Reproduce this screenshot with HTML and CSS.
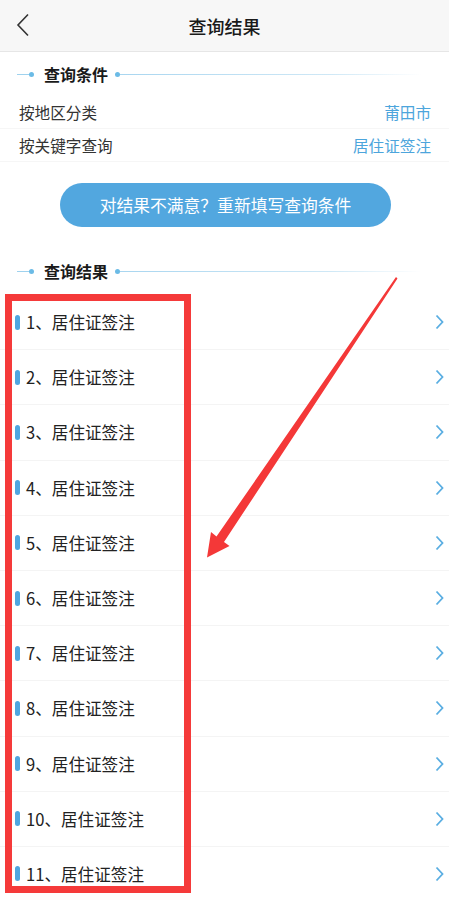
FILE: index.html
```html
<!DOCTYPE html>
<html lang="zh">
<head>
<meta charset="utf-8">
<title>查询结果</title>
<link rel="stylesheet" href="styles.css">
</head>
<body>
<div class="page">
  <header class="nav">
    <span class="back"><svg width="14" height="24" viewBox="0 0 14 24"><path d="M12 1.5 L2 12 L12 22.5" fill="none" stroke="#333" stroke-width="1.6" stroke-linejoin="miter"/></svg></span>
    <h1 class="nav-title">查询结果</h1>
  </header>

  <div class="sec-title">
    <span class="deco-left"></span><span class="dot"></span>
    <span class="sec-text">查询条件</span>
    <span class="dot"></span><span class="deco-right"></span>
  </div>
  <div class="cond-row"><span>按地区分类</span><span class="val">莆田市</span></div>
  <div class="cond-row"><span>按关键字查询</span><span class="val">居住证签注</span></div>

  <div class="btn-wrap"><button class="refill">对结果不满意？重新填写查询条件</button></div>

  <div class="sec-title sec-title-2">
    <span class="deco-left"></span><span class="dot"></span>
    <span class="sec-text">查询结果</span>
    <span class="dot"></span><span class="deco-right"></span>
  </div>

  <ul class="list">
    <li class="item"><span class="mark"></span><span class="name">1、居住证签注</span><svg class="chev" width="9" height="16" viewBox="0 0 9 16"><path d="M1.5 1.5 L7.5 8 L1.5 14.5" fill="none" stroke="#5aaee2" stroke-width="1.8"/></svg></li>
    <li class="item"><span class="mark"></span><span class="name">2、居住证签注</span><svg class="chev" width="9" height="16" viewBox="0 0 9 16"><path d="M1.5 1.5 L7.5 8 L1.5 14.5" fill="none" stroke="#5aaee2" stroke-width="1.8"/></svg></li>
    <li class="item"><span class="mark"></span><span class="name">3、居住证签注</span><svg class="chev" width="9" height="16" viewBox="0 0 9 16"><path d="M1.5 1.5 L7.5 8 L1.5 14.5" fill="none" stroke="#5aaee2" stroke-width="1.8"/></svg></li>
    <li class="item"><span class="mark"></span><span class="name">4、居住证签注</span><svg class="chev" width="9" height="16" viewBox="0 0 9 16"><path d="M1.5 1.5 L7.5 8 L1.5 14.5" fill="none" stroke="#5aaee2" stroke-width="1.8"/></svg></li>
    <li class="item"><span class="mark"></span><span class="name">5、居住证签注</span><svg class="chev" width="9" height="16" viewBox="0 0 9 16"><path d="M1.5 1.5 L7.5 8 L1.5 14.5" fill="none" stroke="#5aaee2" stroke-width="1.8"/></svg></li>
    <li class="item"><span class="mark"></span><span class="name">6、居住证签注</span><svg class="chev" width="9" height="16" viewBox="0 0 9 16"><path d="M1.5 1.5 L7.5 8 L1.5 14.5" fill="none" stroke="#5aaee2" stroke-width="1.8"/></svg></li>
    <li class="item"><span class="mark"></span><span class="name">7、居住证签注</span><svg class="chev" width="9" height="16" viewBox="0 0 9 16"><path d="M1.5 1.5 L7.5 8 L1.5 14.5" fill="none" stroke="#5aaee2" stroke-width="1.8"/></svg></li>
    <li class="item"><span class="mark"></span><span class="name">8、居住证签注</span><svg class="chev" width="9" height="16" viewBox="0 0 9 16"><path d="M1.5 1.5 L7.5 8 L1.5 14.5" fill="none" stroke="#5aaee2" stroke-width="1.8"/></svg></li>
    <li class="item"><span class="mark"></span><span class="name">9、居住证签注</span><svg class="chev" width="9" height="16" viewBox="0 0 9 16"><path d="M1.5 1.5 L7.5 8 L1.5 14.5" fill="none" stroke="#5aaee2" stroke-width="1.8"/></svg></li>
    <li class="item"><span class="mark"></span><span class="name">10、居住证签注</span><svg class="chev" width="9" height="16" viewBox="0 0 9 16"><path d="M1.5 1.5 L7.5 8 L1.5 14.5" fill="none" stroke="#5aaee2" stroke-width="1.8"/></svg></li>
    <li class="item"><span class="mark"></span><span class="name">11、居住证签注</span><svg class="chev" width="9" height="16" viewBox="0 0 9 16"><path d="M1.5 1.5 L7.5 8 L1.5 14.5" fill="none" stroke="#5aaee2" stroke-width="1.8"/></svg></li>
  </ul>

  <div class="annot-box"></div>
  <svg class="annot-arrow" width="449" height="897" viewBox="0 0 449 897">
    <polygon points="396,277 397.5,278.5 224,542 229.5,546 207,557.5 211,532 216.5,536.5" fill="#f43838"/>
  </svg>
</div>
</body>
</html>
```

FILE: styles.css
```css
* { box-sizing: border-box; }
html, body { margin: 0; padding: 0; background: #fff; }
body {
  font-family: "Noto Sans CJK SC", "Noto Sans", sans-serif;
  color: #222;
  width: 449px;
  height: 897px;
  overflow: hidden;
}
.page { position: relative; width: 449px; height: 897px; overflow: hidden; }

.nav {
  height: 52px;
  background: #f7f7f7;
  border-bottom: 1px solid #e6e6e6;
  display: flex;
  align-items: center;
  justify-content: center;
  position: relative;
}
.back {
  position: absolute;
  left: 16px;
  top: 13px;
  width: 14px;
  height: 24px;
  display: block;
}
.back svg { display: block; }
.nav-title {
  margin: 0;
  font-size: 18px;
  font-weight: 500;
  color: #1a1a1a;
  line-height: 1;
}

.sec-title {
  height: 44px;
  display: flex;
  align-items: center;
  padding-left: 17px;
  padding-right: 28px;
}
.sec-title-2 { margin-top: 22px; height: 44px; }
.deco-left {
  width: 12px;
  height: 1px;
  background: #9fd2ee;
}
.dot {
  width: 5px;
  height: 5px;
  border-radius: 50%;
  background: #6bbbe6;
  flex: none;
}
.sec-text {
  font-size: 16px;
  font-weight: 700;
  color: #1a1a1a;
  margin: 0 7px 0 10px;
  line-height: 1;
}
.deco-right {
  flex: 1;
  height: 1px;
  background: linear-gradient(to right, #a9d6f0, #cfe8f6 70%, rgba(220,238,248,0));
}

.cond-row {
  height: 33px;
  display: flex;
  align-items: center;
  justify-content: space-between;
  padding: 0 18px 0 19px;
  font-size: 15.6px;
  color: #333;
  border-bottom: 1px solid #f6f6f6;
}
.cond-row .val { color: #4ca5dc; }

.btn-wrap {
  display: flex;
  justify-content: center;
  margin-top: 21px;
}
.refill {
  width: 331px;
  height: 44px;
  border: none;
  border-radius: 22px;
  background: #52a7df;
  color: #fff;
  font-family: inherit;
  font-size: 16.8px;
  margin-left: 2px;
  padding: 0;
}

.list {
  list-style: none;
  margin: 2px 0 0 0;
  padding: 0;
}
.item {
  height: 55.2px;
  display: flex;
  align-items: center;
  padding-left: 15px;
  padding-right: 5px;
  border-bottom: 1px solid #f4f4f4;
}
.mark {
  width: 5px;
  height: 15px;
  border-radius: 3px;
  background: #4fa6e0;
  flex: none;
}
.name {
  margin-left: 6px;
  font-size: 16.6px;
  color: #222;
  flex: 1;
}
.chev {
  display: block;
  flex: none;
}

.annot-box {
  position: absolute;
  left: 5px;
  top: 294px;
  width: 186px;
  height: 599px;
  border: 7px solid #f53a3a;
}
.annot-arrow {
  position: absolute;
  left: 0;
  top: 0;
  pointer-events: none;
}
```
